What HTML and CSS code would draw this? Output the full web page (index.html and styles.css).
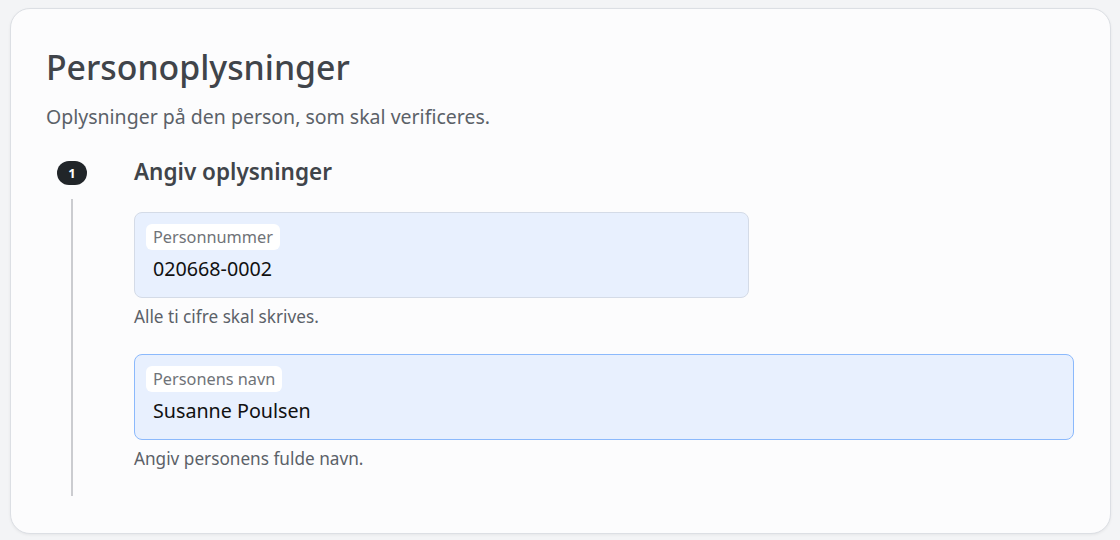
FILE: index.html
```html
<!DOCTYPE html>
<html lang="da">
<head>
    <meta charset="UTF-8">
    <meta name="viewport" content="width=device-width, initial-scale=1.0">
    <title>Personoplysninger</title>
    <link rel="stylesheet" href="styles.css">
</head>
<body>
    <div class="card">
        <h1>Personoplysninger</h1>
        <p class="lead">Oplysninger på den person, som skal verificeres.</p>
        <div class="step">
            <div class="step-rail">
                <span class="step-badge">1</span>
                <span class="step-line"></span>
            </div>
            <div class="step-body">
                <h2>Angiv oplysninger</h2>
                <div class="field field-short">
                    <span class="field-label">Personnummer</span>
                    <div class="field-value">020668-0002</div>
                </div>
                <p class="help">Alle ti cifre skal skrives.</p>
                <div class="field field-focus">
                    <span class="field-label">Personens navn</span>
                    <div class="field-value">Susanne Poulsen</div>
                </div>
                <p class="help">Angiv personens fulde navn.</p>
            </div>
        </div>
    </div>
</body>
</html>
```

FILE: styles.css
```css
body {
    margin: 0;
    padding: 8px 9px 7px 10px;
    background: #f3f4f6;
    font-family: 'Noto Sans', 'Open Sans', Arial, sans-serif;
}
.card {
    background: #fcfcfd;
    border: 1px solid #dcdfe4;
    border-radius: 20px;
    padding: 38px 36px 37px 35px;
    box-shadow: 0 1px 3px rgba(0, 0, 0, 0.06);
}
h1 {
    margin: 0;
    font-size: 33.8px;
    font-weight: 500;
    line-height: 40px;
    color: #40444a;
}
.lead {
    margin: 15px 0 0;
    font-size: 19.5px;
    line-height: 30px;
    color: #5b6168;
}
.step {
    display: flex;
    margin-top: 25px;
}
.step-rail {
    width: 52px;
    margin-right: 36px;
    display: flex;
    flex-direction: column;
    align-items: center;
    padding-top: 4px;
}
.step-badge {
    width: 30px;
    height: 24px;
    border-radius: 12px;
    background: #212529;
    color: #fff;
    font-size: 13px;
    font-weight: 700;
    line-height: 24px;
    text-align: center;
}
.step-line {
    flex: 1;
    width: 2px;
    margin-top: 14px;
    background: #cbccd0;
}
.step-body {
    flex: 1;
    padding-bottom: 25px;
}
h2 {
    margin: 0;
    font-size: 22.5px;
    font-weight: 600;
    line-height: 30px;
    color: #40444a;
}
.field {
    margin-top: 25px;
    background: #e8f0fe;
    border: 1px solid #d4dbe7;
    border-radius: 8px;
    padding: 11px 11px 13px;
}
.field-short {
    width: 591px;
}
.field-focus {
    border-color: #8bb9fc;
}
.field-label {
    display: inline-block;
    background: #fff;
    border-radius: 6px;
    padding: 0 7px;
    font-size: 16.3px;
    line-height: 26px;
    color: #6f7378;
}
.field-value {
    margin-top: 4px;
    padding-left: 7px;
    font-size: 19.7px;
    line-height: 30px;
    color: #111;
}
.help {
    margin: 7px 0 0;
    font-size: 17.2px;
    line-height: 24px;
    color: #5b6168;
}
```
